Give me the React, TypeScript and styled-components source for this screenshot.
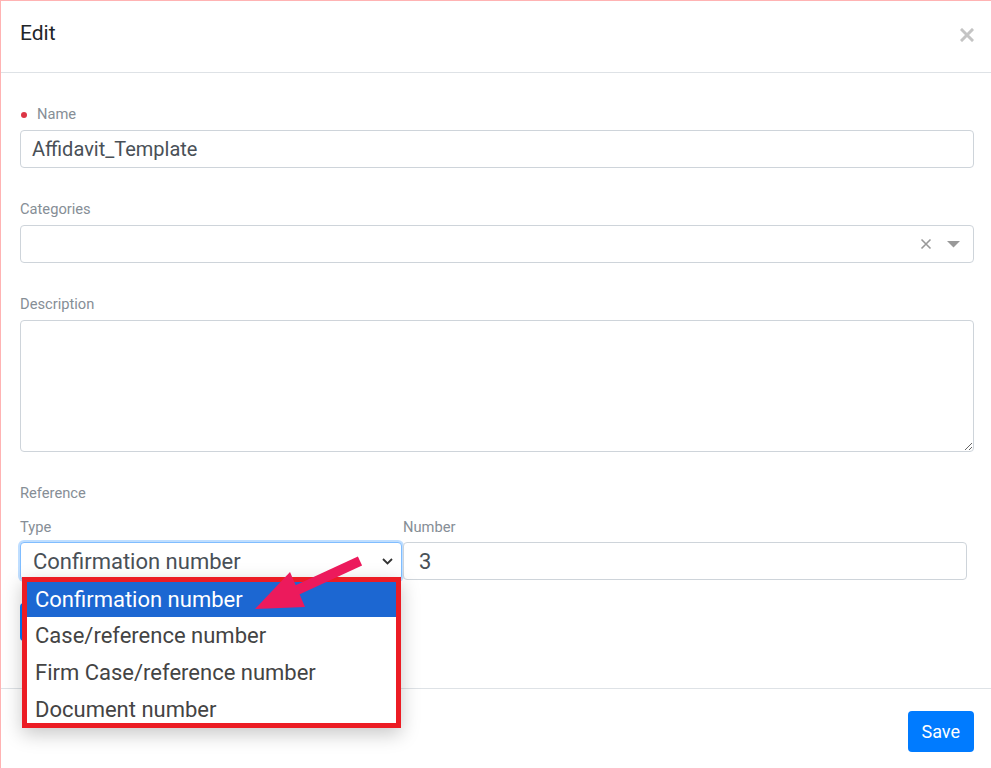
import React from "react";
import styled, { createGlobalStyle } from "styled-components";

const Global = createGlobalStyle`
  html, body { margin: 0; padding: 0; overflow: hidden; background: #fff; }
  body { font-family: Roboto, "Liberation Sans", Arial, sans-serif; }
  * { box-sizing: border-box; }
`;

const Modal = styled.div`
  position: relative;
  width: 991px;
  height: 768px;
  border-top: 1px solid #ffb3b3;
  border-left: 1px solid #ffb3b3;
  background: #fff;
  display: flex;
  flex-direction: column;
`;

const Header = styled.div`
  height: 72px;
  padding: 20px 17px 0 19px;
  border-bottom: 1px solid #dee2e6;
  display: flex;
  align-items: flex-start;
  justify-content: space-between;
`;

const Title = styled.h5`
  margin: 0;
  font-size: 21px;
  line-height: 24px;
  font-weight: 400;
  color: #212529;
`;

const CloseBtn = styled.button`
  border: 0;
  background: none;
  padding: 0;
  margin-top: 7px;
  width: 14px;
  height: 14px;
  display: flex;
  cursor: pointer;
`;

const Body = styled.div`
  padding: 31px 17px 47px 19px;
  border-bottom: 1px solid #dee2e6;
`;

const Group = styled.div<{ $mb?: number }>`
  margin-bottom: ${(p) => (p.$mb ?? 31)}px;
`;

const Label = styled.label<{ $mb?: number }>`
  display: flex;
  align-items: center;
  font-size: 14.7px;
  line-height: 21px;
  color: #868e96;
  margin-bottom: ${(p) => (p.$mb ?? 5)}px;
`;

const RequiredDot = styled.span`
  width: 6px;
  height: 6px;
  border-radius: 50%;
  background: #dc3545;
  margin: 0 10px 0 1px;
`;

const Input = styled.div<{ $size?: number; $pl?: number }>`
  width: 100%;
  height: 38px;
  border: 1px solid #ced4da;
  border-radius: 4px;
  padding: 0 11px 0 ${(p) => p.$pl ?? 11}px;
  display: flex;
  align-items: center;
  font-size: ${(p) => p.$size ?? 20}px;
  color: #495057;
  background: #fff;
`;

const SelectBox = styled(Input)`
  justify-content: space-between;
  padding-right: 13px;
`;

const SelectIcons = styled.div`
  display: flex;
  align-items: center;
  gap: 15px;
  color: #999;
`;

const TextArea = styled.textarea`
  display: block;
  width: 100%;
  height: 132px;
  border: 1px solid #ced4da;
  border-radius: 4px;
  font-family: inherit;
  font-size: 16px;
  resize: vertical;
  outline: none;
`;

const RefRow = styled.div`
  display: grid;
  grid-template-columns: 382px 564px;
  column-gap: 1px;
`;

const Col = styled.div`
  position: relative;
`;

const FocusSelect = styled.div`
  height: 38px;
  border: 1px solid #80bdff;
  border-radius: 4px;
  box-shadow: 0 0 0 2px rgba(0, 123, 255, 0.25);
  padding: 0 8px 0 12px;
  display: flex;
  align-items: center;
  justify-content: space-between;
  font-size: 22px;
  color: #495057;
  background: #fff;
`;

const Dropdown = styled.ul`
  position: absolute;
  left: 2px;
  top: 60px;
  width: 379px;
  height: 151px;
  margin: 0;
  padding: 0;
  list-style: none;
  border: 5px solid #ec1c24;
  background: #fff;
  overflow: hidden;
  box-shadow: 0 6px 18px rgba(0, 0, 0, 0.22);
  z-index: 5;
`;

const Option = styled.li<{ $active?: boolean }>`
  height: ${(p) => (p.$active ? 35 : 37)}px;
  padding: 0 8px;
  display: flex;
  align-items: center;
  font-size: 22px;
  white-space: nowrap;
  color: ${(p) => (p.$active ? "#fff" : "#444")};
  background: ${(p) => (p.$active ? "#1c67d2" : "#fff")};
`;

const AddButton = styled.button`
  display: block;
  margin-top: 23px;
  height: 38px;
  width: 110px;
  border: 0;
  border-radius: 4px;
  background: #007bff;
`;

const Footer = styled.div`
  flex: 1;
  padding: 22px 17px 0 0;
  display: flex;
  justify-content: flex-end;
  align-items: flex-start;
`;

const SaveButton = styled.button`
  height: 41px;
  padding: 0 14px;
  border: 0;
  border-radius: 4px;
  background: #007bff;
  color: #fff;
  font-family: inherit;
  font-size: 18px;
  cursor: pointer;
`;

const ArrowSvg = styled.svg`
  position: absolute;
  left: 249px;
  top: 549px;
  width: 115px;
  height: 62px;
  pointer-events: none;
  z-index: 10;
`;

export default function App() {
  return (
    <>
      <Global />
      <Modal>
        <Header>
          <Title>Edit</Title>
          <CloseBtn aria-label="Close">
            <svg width="14" height="14" viewBox="0 0 14 14">
              <path d="M2 2L12 12M12 2L2 12" stroke="#c4c4c4" strokeWidth="3" strokeLinecap="square" />
            </svg>
          </CloseBtn>
        </Header>
        <Body>
          <Group>
            <Label>
              <RequiredDot />
              Name
            </Label>
            <Input>Affidavit_Template</Input>
          </Group>
          <Group>
            <Label>Categories</Label>
            <SelectBox>
              <span />
              <SelectIcons>
                <svg width="12" height="12" viewBox="0 0 12 12">
                  <path d="M1.5 1.5L10.5 10.5M10.5 1.5L1.5 10.5" stroke="#999" strokeWidth="1.6" />
                </svg>
                <svg width="13" height="7" viewBox="0 0 13 7">
                  <path d="M0 0H13L6.5 6.5Z" fill="#999" />
                </svg>
              </SelectIcons>
            </SelectBox>
          </Group>
          <Group>
            <Label>Description</Label>
            <TextArea />
          </Group>
          <Label $mb={13}>Reference</Label>
          <RefRow>
            <Col>
              <Label $mb={4}>Type</Label>
              <FocusSelect>
                <span>Confirmation number</span>
                <svg width="11" height="7" viewBox="0 0 11 7">
                  <path d="M1 1L5.5 5.5L10 1" stroke="#333" strokeWidth="1.8" fill="none" />
                </svg>
              </FocusSelect>
              <Dropdown>
                <Option $active>Confirmation number</Option>
                <Option>Case/reference number</Option>
                <Option>Firm Case/reference number</Option>
                <Option>Document number</Option>
              </Dropdown>
              <AddButton aria-label="Add" />
            </Col>
            <Col>
              <Label $mb={4}>Number</Label>
              <Input $size={22} $pl={15}>3</Input>
            </Col>
          </RefRow>
        </Body>
        <Footer>
          <SaveButton>Save</SaveButton>
        </Footer>
        <ArrowSvg viewBox="249 549 115 62">
          <line x1="359" y1="560" x2="294" y2="590" stroke="#ec1a5c" strokeWidth="10" />
          <polygon points="289,571 304,606 254,608" fill="#ec1a5c" />
        </ArrowSvg>
      </Modal>
    </>
  );
}
